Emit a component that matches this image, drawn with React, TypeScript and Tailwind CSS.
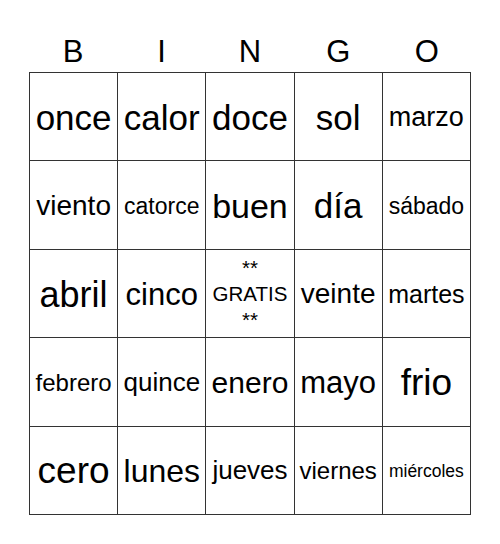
const letters = ["B", "I", "N", "G", "O"];

// Each word carries its own font size, like the printed card's auto-fit text.
const rows: { word: string; size: string }[][] = [
  [
    { word: "once", size: "text-[35px]" },
    { word: "calor", size: "text-[35px]" },
    { word: "doce", size: "text-[35px]" },
    { word: "sol", size: "text-[35px]" },
    { word: "marzo", size: "text-[27px]" },
  ],
  [
    { word: "viento", size: "text-[28px]" },
    { word: "catorce", size: "text-[23px]" },
    { word: "buen", size: "text-[34px]" },
    { word: "día", size: "text-[35px]" },
    { word: "sábado", size: "text-[23px]" },
  ],
  [
    { word: "abril", size: "text-[36px]" },
    { word: "cinco", size: "text-[31px]" },
    { word: "FREE", size: "text-[20.5px]" },
    { word: "veinte", size: "text-[28px]" },
    { word: "martes", size: "text-[25px]" },
  ],
  [
    { word: "febrero", size: "text-[24px]" },
    { word: "quince", size: "text-[26px]" },
    { word: "enero", size: "text-[30px]" },
    { word: "mayo", size: "text-[31px]" },
    { word: "frio", size: "text-[37px]" },
  ],
  [
    { word: "cero", size: "text-[37px]" },
    { word: "lunes", size: "text-[32px]" },
    { word: "jueves", size: "text-[26px]" },
    { word: "viernes", size: "text-[24px]" },
    { word: "miércoles", size: "text-[17.5px]" },
  ],
];

export default function App() {
  return (
    <div className="h-[544px] w-[500px] bg-white pt-[34px] font-['Liberation_Sans',Arial,sans-serif] text-black">
      <div className="mx-[29px] w-[442px]">
        {/* header letters */}
        <div className="grid h-[38px] grid-cols-5">
          {letters.map((l) => (
            <div key={l} className="text-center text-[31px] leading-[36px]">
              {l}
            </div>
          ))}
        </div>

        <table className="w-[442px] table-fixed border-collapse">
          <tbody>
            {rows.map((row, i) => (
              <tr key={i}>
                {row.map((c) => (
                  <td
                    key={c.word}
                    className={`h-[88.4px] border border-[#333] p-0 pt-[2px] text-center align-middle ${c.size} leading-[1.15]`}
                  >
                    {c.word === "FREE" ? (
                      <div className="leading-[26px]">
                        **
                        <br />
                        GRATIS
                        <br />
                        **
                      </div>
                    ) : (
                      c.word
                    )}
                  </td>
                ))}
              </tr>
            ))}
          </tbody>
        </table>
      </div>
    </div>
  );
}
